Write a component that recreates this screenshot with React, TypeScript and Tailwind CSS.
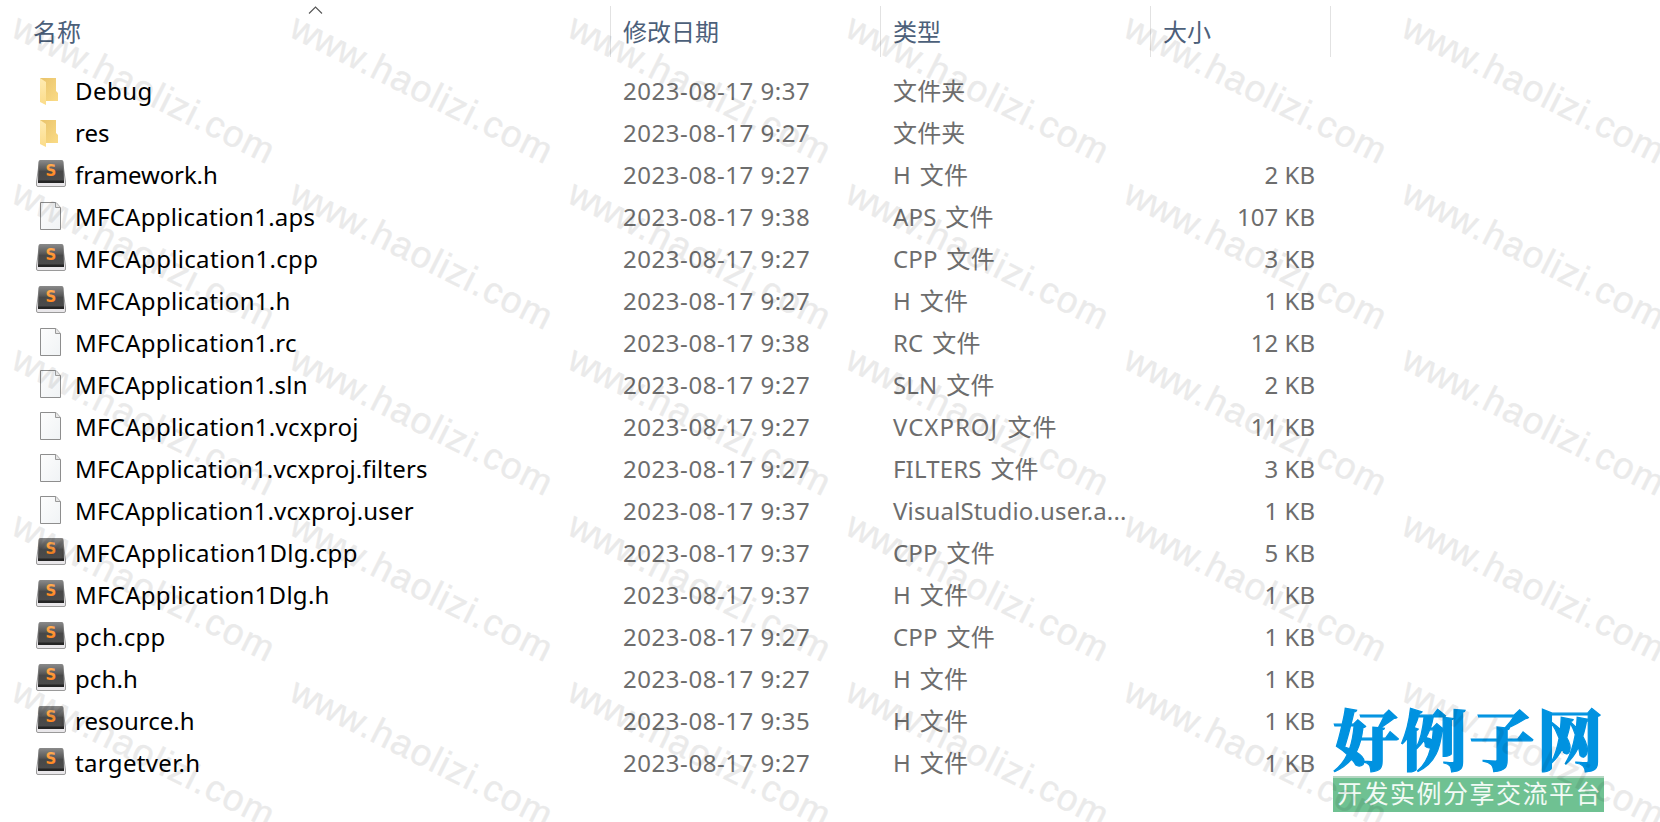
type FileKind = 'folder' | 'sublime' | 'page';

interface FileRow {
  name: string;
  date: string;
  type: string;
  size?: string;
  kind: FileKind;
  spacing: string;
}

const files: FileRow[] = [
  { name: 'Debug', date: '2023-08-17 9:37', type: '文件夹', kind: 'folder', spacing: 'tracking-[0.45px]' },
  { name: 'res', date: '2023-08-17 9:27', type: '文件夹', kind: 'folder', spacing: 'tracking-[0px]' },
  { name: 'framework.h', date: '2023-08-17 9:27', type: 'H 文件', size: '2 KB', kind: 'sublime', spacing: 'tracking-[-0.13px]' },
  { name: 'MFCApplication1.aps', date: '2023-08-17 9:38', type: 'APS 文件', size: '107 KB', kind: 'page', spacing: 'tracking-[0.24px]' },
  { name: 'MFCApplication1.cpp', date: '2023-08-17 9:27', type: 'CPP 文件', size: '3 KB', kind: 'sublime', spacing: 'tracking-[0.33px]' },
  { name: 'MFCApplication1.h', date: '2023-08-17 9:27', type: 'H 文件', size: '1 KB', kind: 'sublime', spacing: 'tracking-[0.28px]' },
  { name: 'MFCApplication1.rc', date: '2023-08-17 9:38', type: 'RC 文件', size: '12 KB', kind: 'page', spacing: 'tracking-[0.27px]' },
  { name: 'MFCApplication1.sln', date: '2023-08-17 9:27', type: 'SLN 文件', size: '2 KB', kind: 'page', spacing: 'tracking-[0.22px]' },
  { name: 'MFCApplication1.vcxproj', date: '2023-08-17 9:27', type: 'VCXPROJ 文件', size: '11 KB', kind: 'page', spacing: 'tracking-[0.28px]' },
  { name: 'MFCApplication1.vcxproj.filters', date: '2023-08-17 9:27', type: 'FILTERS 文件', size: '3 KB', kind: 'page', spacing: 'tracking-[0.15px]' },
  { name: 'MFCApplication1.vcxproj.user', date: '2023-08-17 9:37', type: 'VisualStudio.user.a...', size: '1 KB', kind: 'page', spacing: 'tracking-[0.19px]' },
  { name: 'MFCApplication1Dlg.cpp', date: '2023-08-17 9:37', type: 'CPP 文件', size: '5 KB', kind: 'sublime', spacing: 'tracking-[0.33px]' },
  { name: 'MFCApplication1Dlg.h', date: '2023-08-17 9:37', type: 'H 文件', size: '1 KB', kind: 'sublime', spacing: 'tracking-[0.27px]' },
  { name: 'pch.cpp', date: '2023-08-17 9:27', type: 'CPP 文件', size: '1 KB', kind: 'sublime', spacing: 'tracking-[0.3px]' },
  { name: 'pch.h', date: '2023-08-17 9:27', type: 'H 文件', size: '1 KB', kind: 'sublime', spacing: 'tracking-[0.1px]' },
  { name: 'resource.h', date: '2023-08-17 9:35', type: 'H 文件', size: '1 KB', kind: 'sublime', spacing: 'tracking-[0px]' },
  { name: 'targetver.h', date: '2023-08-17 9:27', type: 'H 文件', size: '1 KB', kind: 'sublime', spacing: 'tracking-[0.33px]' },
];

function FolderIcon() {
  return (
    <svg width="32" height="32" viewBox="0 0 32 32">
      <path d="M5 3h16v13l2 2v8H10z" fill="url(#folder-back)" />
      <path d="M5 3l6 4v23l-6-3z" fill="url(#folder-front)" />
    </svg>
  );
}

function SublimeIcon() {
  return (
    <svg width="32" height="32" viewBox="0 0 32 32">
      <path d="M4.500 2h23l3 21v3a1.500 1.500 0 0 1-1.500 1.500H3A1.500 1.500 0 0 1 1.500 26v-3z" fill="#e9e7ea" stroke="#9a9a9a" strokeWidth="1" />
      <path d="M5.500 1h21a2 2 0 0 1 2 2L29 22v2H3v-2L3.500 3a2 2 0 0 1 2-2z" fill="url(#key-cap)" />
      <path d="M3 21.500h26V24H3z" fill="#252525" />
      <text x="16" y="17" textAnchor="middle" fontFamily="DejaVu Sans" fontWeight="700" fontSize="15" fill="url(#key-letter)">S</text>
    </svg>
  );
}

function PageIcon() {
  return (
    <svg width="32" height="32" viewBox="0 0 32 32">
      <path d="M5.500 1.500h15.500l4.500 5v22h-20z" fill="url(#page-fill)" stroke="#8e8e8e" />
      <path d="M20.500 1.500v5h5" fill="#e6e6e6" stroke="#9a9a9a" />
    </svg>
  );
}

function FileIcon({ kind }: { kind: FileKind }) {
  if (kind === 'folder') return <FolderIcon />;
  if (kind === 'sublime') return <SublimeIcon />;
  return <PageIcon />;
}

function Gradients() {
  return (
    <svg width="0" height="0" className="absolute">
      <defs>
        <linearGradient id="folder-back" x1="0" y1="0" x2="1" y2="1">
          <stop offset="0" stopColor="#e9c36b" />
          <stop offset="1" stopColor="#fadb86" />
        </linearGradient>
        <linearGradient id="folder-front" x1="0" y1="0" x2="0" y2="1">
          <stop offset="0" stopColor="#ffebb2" />
          <stop offset="1" stopColor="#fbdc8a" />
        </linearGradient>
        <linearGradient id="key-cap" x1="0" y1="0" x2="0" y2="1">
          <stop offset="0" stopColor="#8a8a8a" />
          <stop offset="0.4" stopColor="#5b5b5b" />
          <stop offset="0.5" stopColor="#484848" />
          <stop offset="1" stopColor="#4c4c4c" />
        </linearGradient>
        <linearGradient id="key-letter" x1="0" y1="0" x2="0" y2="1">
          <stop offset="0" stopColor="#ffb35a" />
          <stop offset="1" stopColor="#ff7a10" />
        </linearGradient>
        <linearGradient id="page-fill" x1="0" y1="0" x2="1" y2="1">
          <stop offset="0" stopColor="#fdfdfd" />
          <stop offset="1" stopColor="#f0f3f5" />
        </linearGradient>
      </defs>
    </svg>
  );
}

function Header() {
  return (
    <div className="flex h-[64px] pt-[6px] pb-[7px] pl-[33px] text-[#4c607a]">
      <div className="relative w-[578px] border-r border-[#e2e2e2] leading-[52px]">
        名称
        <svg className="absolute top-0 left-[275px]" width="15" height="9" viewBox="0 0 15 9" fill="none" stroke="#555" strokeWidth="1.1">
          <path d="M1 7.500l6.500-6.500 6.500 6.500" />
        </svg>
      </div>
      <div className="w-[270px] border-r border-[#e2e2e2] pl-[12px] leading-[52px]">修改日期</div>
      <div className="w-[270px] border-r border-[#e2e2e2] pl-[12px] leading-[52px]">类型</div>
      <div className="w-[180px] border-r border-[#e2e2e2] pl-[12px] leading-[52px]">大小</div>
    </div>
  );
}

// Repeated site mark, drawn over the whole window
function Watermark() {
  const columns = [0, 1, 2, 3, 4, 5];
  const rows = [0, 1, 2, 3, 4];

  return (
    <svg className="pointer-events-none absolute inset-0" width="1660" height="822">
      {rows.map((row) =>
        columns.map((col) => (
          <text
            key={`${row}-${col}`}
            transform={`translate(${9.5 + col * 278} ${35.5 + row * 166}) rotate(26.6)`}
            fontFamily="Liberation Sans"
            fontSize="37"
            fill="#000"
            stroke="#000"
            strokeWidth="0.5"
            opacity="0.08"
          >
            <tspan letterSpacing="-0.4">www</tspan>
            <tspan letterSpacing="1.2">.haolizi.com</tspan>
          </text>
        )),
      )}
    </svg>
  );
}

function SiteLogo() {
  return (
    <div className="absolute top-[703px] left-[1333px] w-[271px]">
      <div className="h-[73px] font-['Noto_Serif_CJK_SC','Noto_Sans_CJK_SC',serif] text-[66px] leading-[68px] font-black tracking-[2px] whitespace-nowrap text-[#0092e0] [-webkit-text-stroke:1.2px_#0092e0]">
        好例子网
      </div>
      <div className="h-[36px] border-t-2 border-[#b4d6c2] bg-[#6fc192] pl-[4px] text-[25px] leading-[30px] tracking-[1.5px] whitespace-nowrap text-[#f2faf5]">
        开发实例分享交流平台
      </div>
    </div>
  );
}

export default function App() {
  return (
    <div className="relative h-[822px] w-[1660px] overflow-hidden bg-white font-['Noto_Sans','Noto_Sans_CJK_SC',sans-serif] text-[24px] text-[#6d6d6d]">
      <Gradients />
      <Header />
      <div className="pt-[6px]">
        {files.map((file) => (
          <div key={file.name} className="flex h-[42px] pl-[35px] leading-[42px] whitespace-nowrap">
            <div className="w-[40px] pt-[5px]">
              <FileIcon kind={file.kind} />
            </div>
            <div className="w-[548px] text-black">
              <span className={file.spacing}>{file.name}</span>
            </div>
            <div className="w-[270px] tracking-[0.55px]">{file.date}</div>
            <div className={file.type.startsWith('VCX') ? 'w-[270px] tracking-[1px] [word-spacing:2px]' : 'w-[270px] tracking-[0.15px] [word-spacing:2.5px]'}>
              {file.type}
            </div>
            <div className="w-[152px] text-right">{file.size}</div>
          </div>
        ))}
      </div>
      <SiteLogo />
      <Watermark />
    </div>
  );
}
